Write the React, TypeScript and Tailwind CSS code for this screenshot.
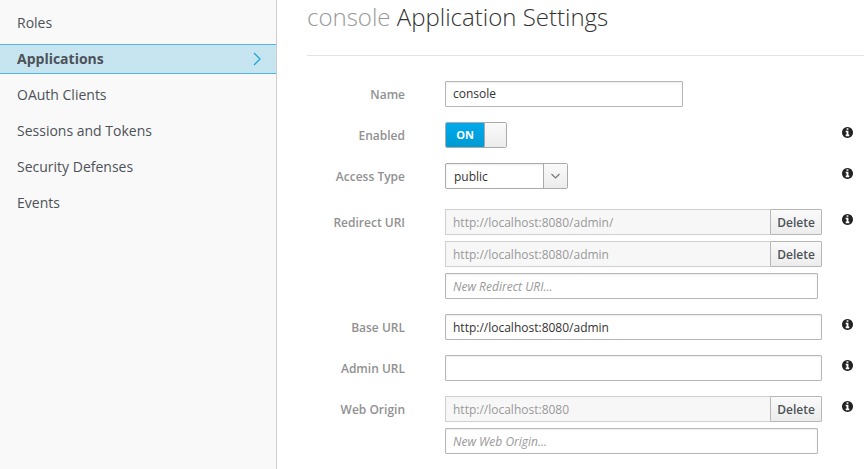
import { useState, type ReactNode } from "react";

const navItems = ["Roles", "Applications", "OAuth Clients", "Sessions and Tokens", "Security Defenses", "Events"];

const inputBase =
  "block h-[26px] rounded-[1px] border border-[#b6b6b6] bg-white px-[7px] text-xs text-[#333333] shadow-[inset_0_1px_2px_rgba(0,0,0,0.08)] outline-none placeholder:italic placeholder:text-[#999999]";

function Sidebar() {
  return (
    <nav className="w-[277px] shrink-0 border-r border-[#cccccc] bg-[#f9f9f9] pt-2">
      <ul className="flex flex-col gap-1.5">
        {navItems.map((item) =>
          item === "Applications" ? (
            <li key={item}>
              <a
                href="#applications"
                aria-current="page"
                className="flex h-[30px] items-center justify-between border-y border-[#50b5df] bg-[#c7e5f0] pr-[15px] pl-[17px] text-sm font-bold text-[#4d5258]"
              >
                {item}
                <svg width="8" height="14" viewBox="0 0 8 14" fill="none" stroke="#1ba6de" strokeWidth="1.3" aria-hidden="true">
                  <path d="M1 1 L7 7 L1 13" />
                </svg>
              </a>
            </li>
          ) : (
            <li key={item}>
              <a href="#nav" className="flex h-[30px] items-center px-[17px] text-sm text-[#4d5258]">
                {item}
              </a>
            </li>
          )
        )}
      </ul>
    </nav>
  );
}

function InfoIcon({ label }: { label: string }) {
  return (
    <svg width="11" height="11" viewBox="128 128 1536 1536" fill="#222222" role="img" aria-label={label}>
      <path d="M1152 1376v-160q0-14-9-23t-23-9h-96v-512q0-14-9-23t-23-9h-320q-14 0-23 9t-9 23v160q0 14 9 23t23 9h96v320h-96q-14 0-23 9t-9 23v160q0 14 9 23t23 9h448q14 0 23-9t9-23zm-128-896v-160q0-14-9-23t-23-9h-192q-14 0-23 9t-9 23v160q0 14 9 23t23 9h192q14 0 23-9t9-23zm640 416q0 209-103 385.5t-279.5 279.5-385.5 103-385.5-103-279.5-279.5-103-385.5 103-385.5 279.5-279.5 385.5-103 385.5 103 279.5 279.5 103 385.5z" />
    </svg>
  );
}

function Row({ label, id, info = true, children }: { label: string; id: string; info?: boolean; children: ReactNode }) {
  return (
    <div className="flex items-start">
      <label htmlFor={id} className="w-[98px] shrink-0 text-right text-xs leading-7 font-semibold text-[#919191]">
        {label}
      </label>
      <div className="ml-10 min-w-0 flex-1">{children}</div>
      <div className="ml-5 flex h-5 w-[11px] shrink-0 items-center">
        {info && <InfoIcon label={`About ${label}`} />}
      </div>
    </div>
  );
}

function SavedValue({ id, value, label }: { id: string; value: string; label: string }) {
  return (
    <div className="flex">
      <input
        id={id}
        aria-label={label}
        readOnly
        value={value}
        className="h-[26px] min-w-0 flex-1 rounded-l-[1px] border border-r-0 border-[#cfcfcf] bg-[#f7f7f7] px-[7px] text-xs text-[#999999] outline-none"
      />
      <button
        type="button"
        className="h-[26px] w-[52px] rounded-r-[1px] border border-[#b6b6b6] bg-linear-to-b from-[#fafafa] to-[#ececec] pt-0.5 text-xs font-semibold text-[#4d5258]"
      >
        Delete
      </button>
    </div>
  );
}

export default function App() {
  const [enabled, setEnabled] = useState(true);
  return (
    <div className="flex min-h-screen bg-white font-['Open_Sans',sans-serif]">
      <Sidebar />
      <main className="min-w-0 flex-1 pl-[30px]">
        <h1 className="h-14 border-b border-[#e3e3e3] text-2xl leading-[34px] font-light text-[#333333]">
          <span className="text-[#999999]">console</span> Application Settings
        </h1>
        <form className="flex flex-col gap-[13px] pt-[25px] pr-[11px] pb-[13px]">
          <Row label="Name" id="name" info={false}>
            <input id="name" defaultValue="console" className={`${inputBase} w-[238px] pb-0.5`} />
          </Row>
          <Row label="Enabled" id="enabled">
            <label className="flex h-[26px] w-[62px] cursor-pointer overflow-hidden rounded-[2px] border border-[#aaaaaa] focus-within:outline">
              <input
                id="enabled"
                type="checkbox"
                role="switch"
                checked={enabled}
                onChange={() => setEnabled(!enabled)}
                className="sr-only"
              />
              <span
                className={`flex flex-1 items-center justify-center text-[11px] font-bold ${
                  enabled ? "bg-linear-to-b from-[#00a9ec] to-[#009bd3] text-white" : "order-last bg-white text-[#4d5258]"
                }`}
              >
                {enabled ? "ON" : "OFF"}
              </span>
              <span className="w-[22px] border-l border-[#aaaaaa] bg-linear-to-b from-[#fafafa] to-[#ececec]" />
            </label>
          </Row>
          <Row label="Access Type" id="access">
            <div className="grid w-[123px]">
              <select
                id="access"
                defaultValue="public"
                className="col-start-1 row-start-1 h-[26px] appearance-none rounded-[2px] border border-[#aaaaaa] bg-white pt-px pl-2 text-xs text-[#333333] shadow-[inset_0_1px_2px_rgba(0,0,0,0.08)] outline-none"
              >
                <option>confidential</option>
                <option>public</option>
                <option>bearer-only</option>
              </select>
              <span className="pointer-events-none col-start-1 row-start-1 m-px flex w-6 items-center justify-center justify-self-end border-l border-[#aaaaaa] bg-linear-to-b from-[#fafafa] to-[#ececec]">
                <svg width="9" height="6" viewBox="0 0 9 6" fill="none" stroke="#777777" strokeWidth="1.2" aria-hidden="true">
                  <path d="M0.5 1 L4.5 5 L8.5 1" />
                </svg>
              </span>
            </div>
          </Row>
          <div className="pt-[5px]">
            <Row label="Redirect URI" id="redirect">
              <div className="flex flex-col gap-1.5 pb-0.5">
                <SavedValue id="redirect" label="Redirect URI 1" value="http://localhost:8080/admin/" />
                <SavedValue id="redirect-2" label="Redirect URI 2" value="http://localhost:8080/admin" />
                <div className="pr-1">
                  <input aria-label="New Redirect URI" placeholder="New Redirect URI..." className={`${inputBase} w-full`} />
                </div>
              </div>
            </Row>
          </div>
          <Row label="Base URL" id="base">
            <input id="base" defaultValue="http://localhost:8080/admin" className={`${inputBase} w-full`} />
          </Row>
          <Row label="Admin URL" id="admin">
            <input id="admin" className={`${inputBase} w-full`} />
          </Row>
          <Row label="Web Origin" id="origin">
            <div className="flex flex-col gap-1.5">
              <SavedValue id="origin" label="Web Origin 1" value="http://localhost:8080" />
              <div className="pr-1">
                <input aria-label="New Web Origin" placeholder="New Web Origin..." className={`${inputBase} w-full`} />
              </div>
            </div>
          </Row>
        </form>
      </main>
    </div>
  );
}
